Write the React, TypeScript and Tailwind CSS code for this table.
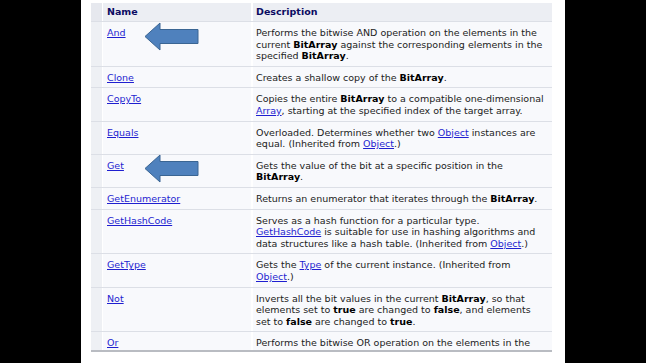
import React from "react";

type Part = string | { b: string } | { a: string };
type Row = { name: string; lines: Part[][] };

const rows: Row[] = [
  {
    name: "And",
    lines: [
      ["Performs the bitwise AND operation on the elements in the"],
      ["current ", { b: "BitArray" }, " against the corresponding elements in the"],
      ["specified ", { b: "BitArray" }, "."],
    ],
  },
  { name: "Clone", lines: [["Creates a shallow copy of the ", { b: "BitArray" }, "."]] },
  {
    name: "CopyTo",
    lines: [
      ["Copies the entire ", { b: "BitArray" }, " to a compatible one-dimensional"],
      [{ a: "Array" }, ", starting at the specified index of the target array."],
    ],
  },
  {
    name: "Equals",
    lines: [
      ["Overloaded. Determines whether two ", { a: "Object" }, " instances are"],
      ["equal. (Inherited from ", { a: "Object" }, ".)"],
    ],
  },
  {
    name: "Get",
    lines: [["Gets the value of the bit at a specific position in the"], [{ b: "BitArray" }, "."]],
  },
  {
    name: "GetEnumerator",
    lines: [["Returns an enumerator that iterates through the ", { b: "BitArray" }, "."]],
  },
  {
    name: "GetHashCode",
    lines: [
      ["Serves as a hash function for a particular type."],
      [{ a: "GetHashCode" }, " is suitable for use in hashing algorithms and"],
      ["data structures like a hash table. (Inherited from ", { a: "Object" }, ".)"],
    ],
  },
  {
    name: "GetType",
    lines: [
      ["Gets the ", { a: "Type" }, " of the current instance. (Inherited from"],
      [{ a: "Object" }, ".)"],
    ],
  },
  {
    name: "Not",
    lines: [
      ["Inverts all the bit values in the current ", { b: "BitArray" }, ", so that"],
      ["elements set to ", { b: "true" }, " are changed to ", { b: "false" }, ", and elements"],
      ["set to ", { b: "false" }, " are changed to ", { b: "true" }, "."],
    ],
  },
  {
    name: "Or",
    lines: [
      ["Performs the bitwise OR operation on the elements in the"],
      ["current ", { b: "BitArray" }, " against the corresponding elements in the"],
      ["specified ", { b: "BitArray" }, "."],
    ],
  },
];

function renderPart(p: Part, i: number) {
  if (typeof p === "string") return <span key={i}>{p}</span>;
  if ("b" in p) return <b key={i} className="font-bold text-black">{p.b}</b>;
  return (
    <span key={i} className="text-[#1f1fd0] underline underline-offset-1">
      {p.a}
    </span>
  );
}

function Arrow({ top }: { top: number }) {
  return (
    <svg
      className="absolute left-[53px]"
      style={{ top }}
      width="56"
      height="29"
      viewBox="0 0 56 29"
    >
      <polygon
        points="1,14.5 16,1 16,7.5 54,7.5 54,21.5 16,21.5 16,28"
        fill="#4f81bd"
        stroke="#3a6593"
        strokeWidth="1"
      />
    </svg>
  );
}

export default function App() {
  return (
    <div
      className="flex w-[646px] h-[363px] bg-black overflow-hidden"
      style={{ fontFamily: '"DejaVu Sans", Verdana, sans-serif' }}
    >
      <div className="w-[81px] shrink-0" />
      <div className="w-[484px] shrink-0 bg-white pl-[10px] pt-[3px]">
        <div className="relative w-[461px] h-[349px] overflow-hidden border-b-2 border-[#b9bcc2] text-[9.5px] leading-[11.6px] text-[#222]">
          {/* header */}
          <div className="grid grid-cols-[12px_150px_299px] h-[19px] bg-[#eceef3] border-b border-[#dcdfe6] font-bold text-[#0b0b62]">
            <div className="bg-[#e6e8ee] border-r border-white" />
            <div className="pl-[4px] flex items-center border-r-2 border-white">Name</div>
            <div className="pl-[3px] flex items-center">Description</div>
          </div>
          {rows.map((r) => (
            <div
              key={r.name}
              className="grid grid-cols-[12px_150px_299px] bg-[#f8f9fc] border-b border-[#dcdfe6]"
            >
              <div className="bg-[#eef0f4] border-r border-white" />
              <div className="pl-[4px] pt-[5px] pb-[4px] border-r-2 border-white">
                <span className="text-[#1f1fd0] underline underline-offset-1">{r.name}</span>
              </div>
              <div className="pl-[3px] pt-[5px] pb-[4px] whitespace-nowrap">
                {r.lines.map((l, i) => (
                  <div key={i}>{l.map(renderPart)}</div>
                ))}
              </div>
            </div>
          ))}
          <Arrow top={19} />
          <Arrow top={151} />
        </div>
      </div>
      <div className="w-[81px] shrink-0" />
    </div>
  );
}
